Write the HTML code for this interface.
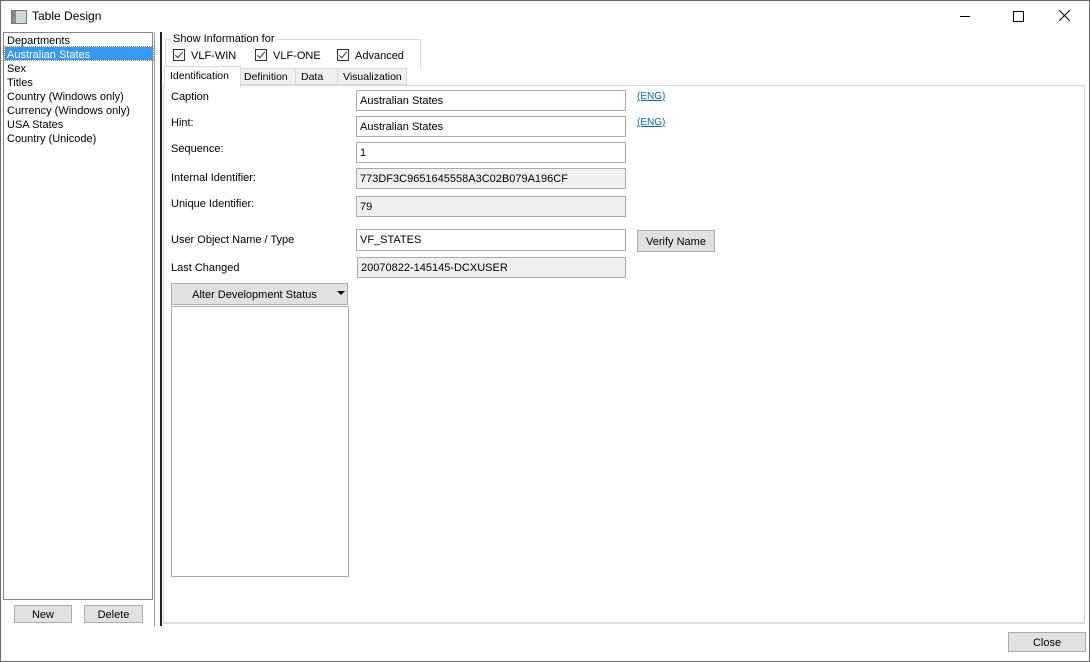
<!DOCTYPE html>
<html><head><style>
body{margin:0;width:1090px;height:662px;background:#fff;font-family:"Liberation Sans",sans-serif;font-size:11px;color:#000;position:relative;overflow:hidden}
.a{position:absolute}
.win{left:0;top:0;width:1088px;height:660px;border:1px solid #6a6a6a}
.inp{position:absolute;height:19px;border:1px solid #aaa;background:#fff;box-sizing:border-box;padding:3px 0 0 3px;font-size:11px}
.ro{background:#f0f0f0}
.btn{position:absolute;background:#e1e1e1;border:1px solid #adadad;box-sizing:border-box;text-align:center;font-size:11px}
.lbl{position:absolute;font-size:11px}
.lnk{position:absolute;color:#0066cc;text-decoration:underline;font-size:10px}
.cb{position:absolute;width:12px;height:12px;border:1px solid #333;box-sizing:border-box;background:#fff}
.cb:after{content:"";position:absolute;left:3px;top:0px;width:3px;height:7px;border:solid #333;border-width:0 1px 1px 0;transform:rotate(40deg)}
.tab{position:absolute;top:68px;height:17px;background:#f0f0f0;border:1px solid #d9d9d9;box-sizing:border-box;padding:2px 0 0 5px;font-size:10.5px}
</style></head><body>
<div class="a win"></div>
<div class="a" style="left:11px;top:10px;width:14px;height:12px;border:1px solid #777;background:linear-gradient(90deg,#888 0 4px,#cfd8d8 4px)"></div>
<div class="a" style="left:32px;top:9px;font-size:12px">Table Design</div>
<div class="a" style="left:960px;top:16px;width:10px;border-top:1px solid #000"></div>
<div class="a" style="left:1013px;top:11px;width:9px;height:9px;border:1px solid #000"></div>
<svg class="a" style="left:1059px;top:10px" width="11" height="11"><path d="M0 0L11 11M11 0L0 11" stroke="#000" stroke-width="1"/></svg>

<div class="a" style="left:3px;top:32px;width:150px;height:568px;border:1px solid #828790;box-sizing:border-box"></div>
<div class="a" style="left:7px;top:34px;line-height:14px;font-size:11px">Departments</div>
<div class="a" style="left:5px;top:47px;width:148px;height:13px;background:#3399ff;outline:1px dotted #e08020"></div>
<div class="a" style="left:7px;top:48px;line-height:14px;font-size:11px;color:#fff">Australian States</div>
<div class="a" style="left:7px;top:62px;line-height:14px;font-size:11px">Sex<br>Titles<br>Country (Windows only)<br>Currency (Windows only)<br>USA States<br>Country (Unicode)</div>
<div class="a" style="left:154px;top:32px;width:1px;height:594px;background:#999"></div>
<div class="a" style="left:160px;top:32px;width:2px;height:594px;background:#222"></div>
<div class="btn" style="left:14px;top:605px;width:58px;height:18px;padding-top:3px">New</div>
<div class="btn" style="left:84px;top:605px;width:59px;height:18px;padding-top:3px">Delete</div>

<div class="a" style="left:165px;top:39px;width:254px;height:29px;border:1px solid #dcdcdc;border-bottom:none"></div>
<div class="a" style="left:171px;top:33px;background:#fff;padding:0 2px;font-size:11px">Show Information for</div>
<div class="cb" style="left:173px;top:49px"></div><div class="lbl" style="left:191px;top:50px">VLF-WIN</div>
<div class="cb" style="left:255px;top:49px"></div><div class="lbl" style="left:273px;top:50px">VLF-ONE</div>
<div class="cb" style="left:337px;top:49px"></div><div class="lbl" style="left:355px;top:50px">Advanced</div>

<div class="a" style="left:163px;top:85px;width:922px;height:539px;border:1px solid #d9d9d9;box-sizing:border-box;border-bottom:2px solid #ddd"></div>
<div class="tab" style="left:240px;width:56px;padding-left:3px">Definition</div>
<div class="tab" style="left:295px;width:43px">Data</div>
<div class="tab" style="left:337px;width:70px">Visualization</div>
<div class="a" style="left:164px;top:66px;width:77px;height:21px;background:#fff;border:1px solid #d9d9d9;border-bottom:none;box-sizing:border-box;padding:3px 0 0 5px;font-size:10.5px">Identification</div>

<div class="lbl" style="left:171px;top:91px">Caption</div>
<div class="inp" style="left:356px;top:90px;width:270px;height:21px;padding-top:4px">Australian States</div>
<div class="lnk" style="left:637px;top:91px">(ENG)</div>
<div class="lbl" style="left:171px;top:117px">Hint:</div>
<div class="inp" style="left:356px;top:116px;width:270px;height:21px;padding-top:4px">Australian States</div>
<div class="lnk" style="left:637px;top:117px">(ENG)</div>
<div class="lbl" style="left:171px;top:143px">Sequence:</div>
<div class="inp" style="left:356px;top:142px;width:270px;height:21px;padding-top:4px">1</div>
<div class="lbl" style="left:171px;top:172px">Internal Identifier:</div>
<div class="inp ro" style="left:356px;top:168px;width:270px;height:21px;padding-top:4px">773DF3C9651645558A3C02B079A196CF</div>
<div class="lbl" style="left:171px;top:198px">Unique Identifier:</div>
<div class="inp ro" style="left:356px;top:196px;width:270px;height:21px;padding-top:4px">79</div>
<div class="lbl" style="left:171px;top:234px">User Object Name / Type</div>
<div class="inp" style="left:356px;top:229px;width:270px;height:22px;padding-top:4px">VF_STATES</div>
<div class="btn" style="left:637px;top:230px;width:78px;height:22px;padding-top:5px">Verify Name</div>
<div class="lbl" style="left:171px;top:262px">Last Changed</div>
<div class="inp ro" style="left:357px;top:257px;width:269px;height:21px;padding-top:4px">20070822-145145-DCXUSER</div>
<div class="btn" style="left:171px;top:283px;width:177px;height:22px;padding:5px 10px 0 0">Alter Development Status</div>
<div class="a" style="left:337px;top:291px;width:0;height:0;border-left:4px solid transparent;border-right:4px solid transparent;border-top:4px solid #000"></div>
<div class="a" style="left:171px;top:306px;width:178px;height:271px;border:1px solid #aaa;box-sizing:border-box"></div>

<div class="btn" style="left:1008px;top:632px;width:78px;height:20px;padding-top:4px">Close</div>
</body></html>
